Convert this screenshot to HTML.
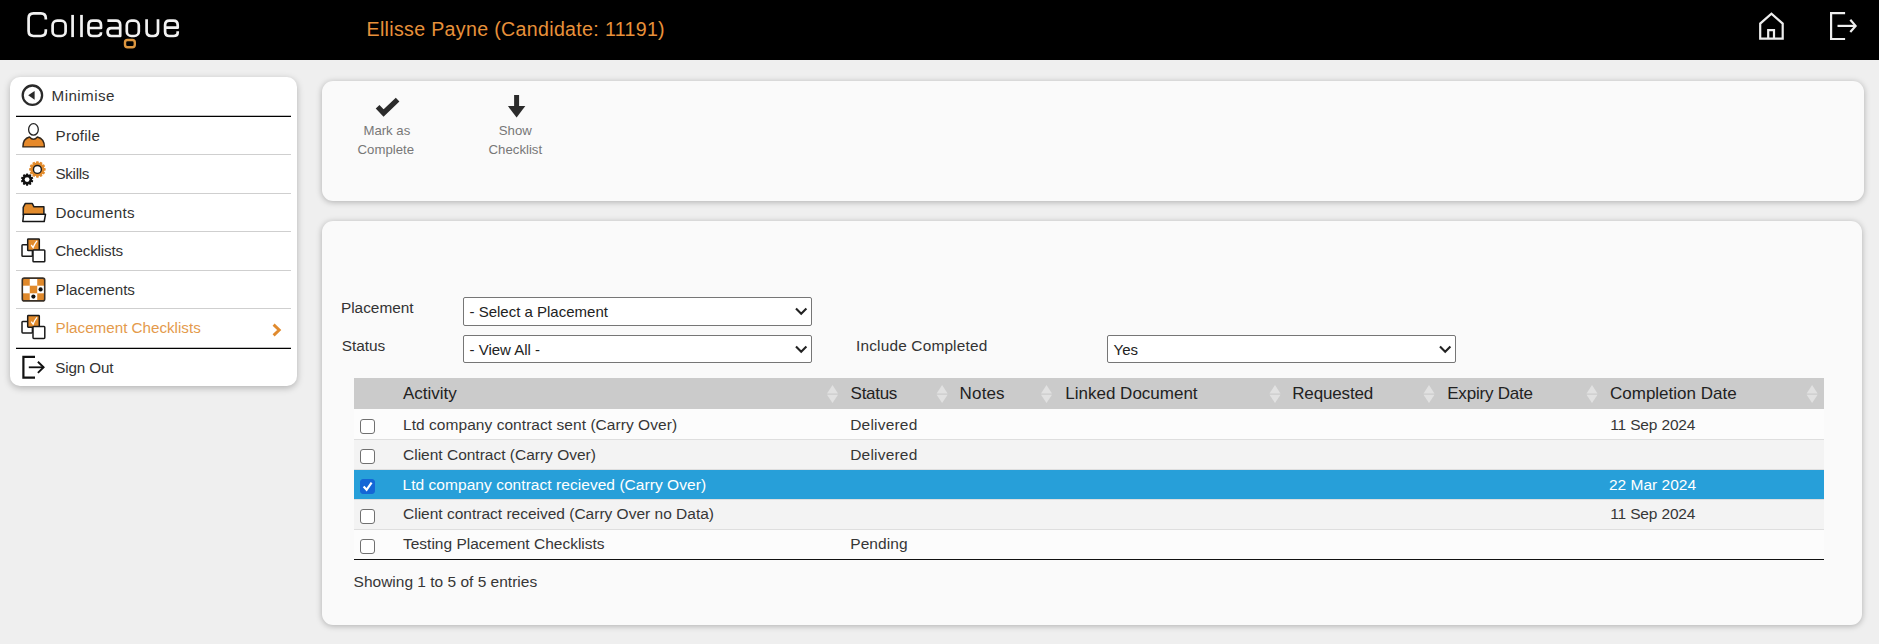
<!DOCTYPE html>
<html><head><meta charset="utf-8">
<style>
*{box-sizing:border-box;margin:0;padding:0}
html,body{width:1879px;height:644px;overflow:hidden;background:#efefef;font-family:"Liberation Sans",sans-serif;color:#333}
.a{position:absolute;white-space:nowrap;line-height:1}
#hdr{position:absolute;left:0;top:0;width:1879px;height:60px;background:#000}
#side{position:absolute;left:10px;top:77px;width:287px;height:309px;background:#fff;border-radius:10px;box-shadow:0 2px 7px rgba(0,0,0,.26)}
.sep{position:absolute;left:16px;width:275px;height:1px;background:#cfcfcf}
.sepb{position:absolute;left:16px;width:275px;height:2px;background:linear-gradient(#bdbdbd 50%,#000 50%)}
.si{font-size:15.2px;color:#333}
.panel{position:absolute;background:#fafafa;border-radius:11px;box-shadow:0 1px 6px rgba(0,0,0,.28)}
.tb{font-size:13.2px;color:#777}
.lbl{font-size:15.4px;color:#333}
.sel{position:absolute;background:#fff;border:1px solid #767676;border-radius:2px}
.st{font-size:15px;color:#222}
.htx{font-size:17px;color:#222;top:384.7px}
.row{position:absolute;left:354px;width:1470px;height:30px;border-bottom:1px solid #dedede}
.ct{font-size:15.5px;color:#363636}
.cb{position:absolute;left:360px;width:15px;height:15px;border:1.6px solid #707070;border-radius:3px;background:#fff}
svg{position:absolute;overflow:visible}
</style></head>
<body>
<div id="hdr"></div>
<!-- logo -->
<svg style="left:0;top:0" width="200" height="60" viewBox="0 0 200 60" fill="none" stroke="#f2f2f2" stroke-width="2.7" stroke-linecap="butt" stroke-linejoin="round">
  <path d="M45.8,19.4 V18.2 Q45.8,13.3 40.9,13.3 H33.5 Q28.6,13.3 28.6,18.2 V31.1 Q28.6,36 33.5,36 H40.9 Q45.8,36 45.8,31.1 V29.2"/>
  <rect x="52.6" y="20.7" width="13" height="15.3" rx="4.6"/>
  <path d="M72.6,14.9 V37.1"/>
  <path d="M81.5,14.9 V37.1"/>
  <path d="M88.5,28 H101 V25 Q101,20.7 96.7,20.7 H92.8 Q88.5,20.7 88.5,25 V31.7 Q88.5,36 92.8,36 H96.9 Q101,36 101,32.6 V32.2"/>
  <path d="M107.4,20.7 H116 Q120.2,20.7 120.2,25 V36 H111.3 Q107.6,36 107.6,32.1 Q107.6,28.1 111.3,28.1 H120.2"/>
  <rect x="126.8" y="20.7" width="12" height="15.3" rx="4.6"/>
  <path d="M146.6,19.3 V31.6 Q146.6,36 151,36 H153.6 Q158,36 158,31.6 V19.3"/>
  <path d="M165.1,27.7 H177.7 V25 Q177.7,20.7 173.4,20.7 H169.4 Q165.1,20.7 165.1,25 V31.7 Q165.1,36 169.4,36 H173.5 Q177.7,36 177.7,32.5 V31.3"/>
  <rect x="125" y="40" width="9.8" height="7.2" rx="2.5" stroke="#dd963f" stroke-width="2.4"/>
</svg>
<div class="a" style="left:366.5px;top:19.8px;font-size:19.6px;letter-spacing:0.33px;color:#e8913a">Ellisse Payne (Candidate: 11191)</div>

<!-- header icons -->
<svg style="left:1755px;top:10px" width="34" height="34" viewBox="0 0 34 34" fill="none" stroke="#eee" stroke-width="2.2">
  <path d="M5.2,28.7 V13.6 L16.45,3.6 L27.7,13.6 V28.7 Z"/>
  <path d="M13.2,28.7 V20.1 H19 V28.7"/>
</svg>
<svg style="left:1826px;top:10px" width="34" height="34" viewBox="0 0 34 34" fill="none" stroke="#eee" stroke-width="2.2">
  <path d="M19.1,3.2 H5.1 V29 H19.1"/>
  <path d="M11.5,15.9 H29.2"/>
  <path d="M24.3,9.8 L29.6,15.9 L24.3,22"/>
</svg>

<!-- sidebar -->
<div id="side"></div>
<div class="sepb" style="top:115px"></div>
<div class="sep" style="top:154px"></div>
<div class="sep" style="top:192.6px"></div>
<div class="sep" style="top:231px"></div>
<div class="sep" style="top:269.8px"></div>
<div class="sep" style="top:308.2px"></div>
<div class="sepb" style="top:347px"></div>

<svg style="left:0;top:0" width="60" height="400">
  <!-- minimise -->
  <circle cx="32.4" cy="95.2" r="9.7" stroke="#2a2a2a" stroke-width="2.3" fill="none"/>
  <path d="M28.2,95.2 L34.6,90.9 V99.7 Z" fill="#2a2a2a"/>
  <!-- profile -->
  <path d="M22.9,146.9 C22.9,141.6 25.4,138 29.5,137 Q33.4,141.6 37.4,137 C41.5,138 44.4,141.6 44.4,146.9 Z" fill="#e6892a" stroke="#33261a" stroke-width="1.4" stroke-linejoin="round"/>
  <ellipse cx="33.45" cy="129.4" rx="4.85" ry="5.75" fill="#fff" stroke="#222" stroke-width="1.3"/>
  <!-- skills -->
  <g transform="translate(37.4,169.4)">
    <circle r="6.9" fill="#e28b2c"/>
    <g fill="#e28b2c"><rect x="-1.35" y="-8.25" width="2.7" height="16.5" rx="0.7" transform="rotate(0)"/><rect x="-1.35" y="-8.25" width="2.7" height="16.5" rx="0.7" transform="rotate(30)"/><rect x="-1.35" y="-8.25" width="2.7" height="16.5" rx="0.7" transform="rotate(60)"/><rect x="-1.35" y="-8.25" width="2.7" height="16.5" rx="0.7" transform="rotate(90)"/><rect x="-1.35" y="-8.25" width="2.7" height="16.5" rx="0.7" transform="rotate(120)"/><rect x="-1.35" y="-8.25" width="2.7" height="16.5" rx="0.7" transform="rotate(150)"/></g>
    <circle r="3.95" fill="#fff" stroke="#1a1a1a" stroke-width="1.4"/>
  </g>
  <g transform="translate(27.1,179.6)">
    <circle r="5" fill="#111"/>
    <g fill="#111"><rect x="-1.05" y="-6.2" width="2.1" height="12.4" rx="0.5" transform="rotate(0)"/><rect x="-1.05" y="-6.2" width="2.1" height="12.4" rx="0.5" transform="rotate(36)"/><rect x="-1.05" y="-6.2" width="2.1" height="12.4" rx="0.5" transform="rotate(72)"/><rect x="-1.05" y="-6.2" width="2.1" height="12.4" rx="0.5" transform="rotate(108)"/><rect x="-1.05" y="-6.2" width="2.1" height="12.4" rx="0.5" transform="rotate(144)"/></g>
    <circle r="2.4" fill="#fff"/>
  </g>
  <!-- documents -->
  <path d="M23.2,215 V207.4 L25.2,203.6 H32.3 L34,206.8 H43.9 V215 Z" fill="#e28b2c" stroke="#1e1e1e" stroke-width="1.5" stroke-linejoin="round"/>
  <path d="M23.6,214.3 H45.5 L44.2,221.5 H22.8 Z" fill="#fff" stroke="#151515" stroke-width="1.5" stroke-linejoin="round"/>
  <!-- checklists -->
  <g id="chk">
    <rect x="22" y="244.8" width="10.4" height="11.5" rx="0.8" fill="#fff" stroke="#1a1a1a" stroke-width="1.5"/>
    <rect x="27.7" y="239" width="11.6" height="11.6" rx="0.6" fill="#e28b2c" stroke="#1a1a1a" stroke-width="1.5"/>
    <path d="M31.2,245 L33.1,247.6 Q34.6,243.6 37,240.8" fill="none" stroke="#fff" stroke-width="1.3"/>
    <rect x="33" y="250" width="11.8" height="11.8" rx="0.8" fill="#fff" stroke="#1a1a1a" stroke-width="1.5"/>
  </g>
  <!-- placements -->
  <rect x="22.3" y="278.1" width="22.4" height="22.8" rx="2" fill="#fff"/>
  <g fill="#e0892b">
    <rect x="22.3" y="278.1" width="7.47" height="7.6"/>
    <rect x="37.23" y="278.1" width="7.47" height="7.6"/>
    <rect x="29.77" y="285.7" width="7.47" height="7.6"/>
    <rect x="22.3" y="293.3" width="7.47" height="7.6"/>
    <rect x="37.23" y="293.3" width="7.47" height="7.6"/>
  </g>
  <rect x="22.3" y="278.1" width="22.4" height="22.8" rx="2" fill="none" stroke="#3a3026" stroke-width="1.6"/>
  <circle cx="40.6" cy="289.4" r="2.1" fill="#111"/>
  <circle cx="33.4" cy="296.6" r="2.1" fill="#111"/>
  <!-- placement checklists -->
  <use href="#chk" transform="translate(0,76.6)"/>
  <!-- sign out -->
  <path d="M35,356.8 H23.4 V377.7 H35" fill="none" stroke="#111" stroke-width="2.2"/>
  <path d="M28.8,367.3 H43.5" fill="none" stroke="#111" stroke-width="1.8"/>
  <path d="M37.9,361.8 L43.6,367.3 L37.9,372.9" fill="none" stroke="#111" stroke-width="1.9"/>
  <!-- chevron -->
</svg>
<svg style="left:0;top:0" width="300" height="400">
  <path d="M273.6,324.6 L279.2,330 L273.6,335.4" fill="none" stroke="#e08a2e" stroke-width="2.9"/>
</svg>

<div class="a si" style="left:51.6px;top:88.4px;letter-spacing:0.42px">Minimise</div>
<div class="a si" style="left:55.6px;top:128.2px;letter-spacing:0.2px">Profile</div>
<div class="a si" style="left:55.6px;top:166.1px;letter-spacing:-0.35px">Skills</div>
<div class="a si" style="left:55.6px;top:205.4px;letter-spacing:0.26px">Documents</div>
<div class="a si" style="left:55.3px;top:243.4px;letter-spacing:-0.15px">Checklists</div>
<div class="a si" style="left:55.6px;top:282.1px">Placements</div>
<div class="a si" style="left:55.6px;top:320px;color:#e49a4c">Placement Checklists</div>
<div class="a si" style="left:55.2px;top:359.8px;letter-spacing:-0.1px">Sign Out</div>

<!-- toolbar panel -->
<div class="panel" style="left:322px;top:81px;width:1542px;height:120px"></div>
<svg style="left:0;top:0" width="600" height="200">
  <path d="M377.6,106.8 L383.6,113 L397.6,99.6" fill="none" stroke="#2b2b2b" stroke-width="5.2" stroke-linejoin="miter"/>
  <path d="M516.6,95 V107" stroke="#2b2b2b" stroke-width="5" fill="none"/>
  <path d="M507.9,106 H525.3 L516.6,117.6 Z" fill="#2b2b2b"/>
</svg>
<div class="a tb" style="left:363.4px;top:123.5px">Mark as</div>
<div class="a tb" style="left:357.6px;top:142.8px">Complete</div>
<div class="a tb" style="left:498.8px;top:123.5px">Show</div>
<div class="a tb" style="left:488.6px;top:142.8px">Checklist</div>

<!-- main panel -->
<div class="panel" style="left:322px;top:221px;width:1540px;height:404px"></div>
<div class="a lbl" style="left:340.9px;top:300px">Placement</div>
<div class="a lbl" style="left:341.7px;top:337.9px">Status</div>
<div class="a lbl" style="left:856px;top:338.3px;letter-spacing:0.18px">Include Completed</div>

<div class="sel" style="left:463px;top:297px;width:349px;height:29px"></div>
<div class="sel" style="left:463px;top:335px;width:349px;height:28px"></div>
<div class="sel" style="left:1107px;top:335px;width:349px;height:28px"></div>
<div class="a st" style="left:469.5px;top:303.8px">- Select a Placement</div>
<div class="a st" style="left:469.5px;top:341.8px">- View All -</div>
<div class="a st" style="left:1113.5px;top:342.3px">Yes</div>
<svg style="left:0;top:0" width="1500" height="400" fill="none" stroke="#222" stroke-width="2.1">
  <path d="M796,308.6 L801.2,313.8 L806.4,308.6"/>
  <path d="M796,346.6 L801.2,351.8 L806.4,346.6"/>
  <path d="M1440,346.6 L1445.2,351.8 L1450.4,346.6"/>
</svg>

<!-- table -->
<div style="position:absolute;left:354px;top:378px;width:1470px;height:31px;background:#cbcbcb"></div>
<div class="a htx" style="left:402.9px">Activity</div>
<div class="a htx" style="left:850.6px;letter-spacing:-0.3px">Status</div>
<div class="a htx" style="left:959.6px;letter-spacing:0.15px">Notes</div>
<div class="a htx" style="left:1065.3px">Linked Document</div>
<div class="a htx" style="left:1292.2px;letter-spacing:-0.14px">Requested</div>
<div class="a htx" style="left:1447.2px;letter-spacing:-0.2px">Expiry Date</div>
<div class="a htx" style="left:1610px">Completion Date</div>
<svg style="left:0;top:0" width="1879" height="644" fill="#e1e1e1">
  <g id="srt"><path d="M827,393.5 L832.5,384.9 L838,393.5 Z"/><path d="M827,394.7 L832.5,403 L838,394.7 Z"/></g>
  <use href="#srt" transform="translate(109.6,0)"/>
  <use href="#srt" transform="translate(214,0)"/>
  <use href="#srt" transform="translate(442.5,0)"/>
  <use href="#srt" transform="translate(596.5,0)"/>
  <use href="#srt" transform="translate(759.5,0)"/>
  <use href="#srt" transform="translate(979.6,0)"/>
</svg>

<div class="row" style="top:409px;height:31px;background:#fcfcfc"></div>
<div class="row" style="top:440px;background:#f3f3f3"></div>
<div class="row" style="top:470px;background:#279fd9;border-bottom:1px solid #dedede"></div>
<div class="row" style="top:500px;background:#f3f3f3"></div>
<div class="row" style="top:530px;background:#fcfcfc;border-bottom:1px solid #111"></div>

<div class="cb" style="top:419px"></div>
<div class="cb" style="top:449px"></div>
<div class="cb" style="top:479px;background:#1466d6;border-color:#1466d6"></div>
<svg style="left:0;top:0" width="400" height="600"><path d="M363.6,486.6 L366.6,489.8 L371.6,482.6" fill="none" stroke="#fff" stroke-width="2.2"/></svg>
<div class="cb" style="top:509px"></div>
<div class="cb" style="top:539px"></div>

<div class="a ct" style="left:403px;top:416.7px;letter-spacing:0.05px">Ltd company contract sent (Carry Over)</div>
<div class="a ct" style="left:850.2px;top:416.7px;letter-spacing:0.2px">Delivered</div>
<div class="a ct" style="left:1610.2px;top:416.7px;letter-spacing:-0.15px">11 Sep 2024</div>
<div class="a ct" style="left:403px;top:446.7px">Client Contract (Carry Over)</div>
<div class="a ct" style="left:850.2px;top:446.7px;letter-spacing:0.2px">Delivered</div>
<div class="a ct" style="left:402.5px;top:476.7px;color:#fff;letter-spacing:0.05px">Ltd company contract recieved (Carry Over)</div>
<div class="a ct" style="left:1609px;top:476.7px;color:#fff">22 Mar 2024</div>
<div class="a ct" style="left:403px;top:505.9px">Client contract received (Carry Over no Data)</div>
<div class="a ct" style="left:1610.2px;top:505.9px;letter-spacing:-0.15px">11 Sep 2024</div>
<div class="a ct" style="left:403px;top:535.8px">Testing Placement Checklists</div>
<div class="a ct" style="left:850.2px;top:535.8px;letter-spacing:0.1px">Pending</div>

<div class="a ct" style="left:353.6px;top:574.4px">Showing 1 to 5 of 5 entries</div>
</body></html>
